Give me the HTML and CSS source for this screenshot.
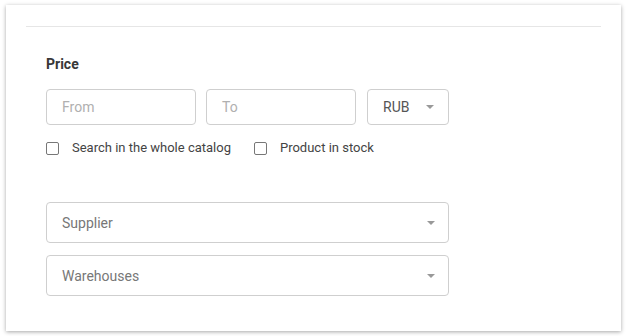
FILE: index.html
```html
<!DOCTYPE html>
<html lang="en">
<head>
  <meta charset="UTF-8" />
  <title>Filter</title>
  <link rel="stylesheet" href="styles.css">
</head>
<body>
  <div class="card">
    <div class="divider"></div>
    <div class="content">
      <div class="label">Price</div>
      <div class="price-row">
        <div class="field price">From</div>
        <div class="field price">To</div>
        <div class="field currency">
          <span class="value">RUB</span>
          <span class="caret"></span>
        </div>
      </div>
      <div class="checks">
        <label class="check"><span class="box"></span>Search in the whole catalog</label>
        <label class="check"><span class="box"></span>Product in stock</label>
      </div>
      <div class="selects">
        <div class="field select">
          <span class="value">Supplier</span>
          <span class="caret"></span>
        </div>
        <div class="field select">
          <span class="value">Warehouses</span>
          <span class="caret"></span>
        </div>
      </div>
    </div>
  </div>
</body>
</html>
```
FILE: styles.css
```css
body {
  margin: 0;
  padding: 5px 6px;
  background: #fff;
  font-family: Roboto, "Liberation Sans", sans-serif;
  color: #333;
}
.card {
  width: 615px;
  height: 326px;
  box-sizing: border-box;
  background: #fff;
  box-shadow: 0 1px 4px rgba(0, 0, 0, 0.35);
  padding: 21px 20px 0;
}
.divider {
  height: 1px;
  background: #e6e6e6;
}
.content {
  padding: 0 20px;
}
.label {
  margin-top: 29px;
  font-size: 14px;
  font-weight: bold;
  line-height: 16px;
  color: #383838;
}
.price-row {
  display: flex;
  gap: 10px;
  margin-top: 17px;
}
.field {
  display: flex;
  align-items: center;
  box-sizing: border-box;
  height: 36px;
  border: 1px solid #cfcfcf;
  border-radius: 4px;
  font-size: 14px;
}
.price {
  width: 150px;
  padding-left: 15px;
  color: #b0b0b0;
}
.currency {
  width: 82px;
  margin-left: 1px;
  padding: 0 14px 0 15px;
  justify-content: space-between;
  color: #555;
}
.caret {
  width: 0;
  height: 0;
  border-left: 4px solid transparent;
  border-right: 4px solid transparent;
  border-top: 4px solid #999;
}
.checks {
  display: flex;
  gap: 23px;
  margin-top: 15px;
}
.check {
  display: flex;
  align-items: center;
  gap: 13px;
  font-size: 13px;
  color: #444;
  line-height: 16px;
}
.box {
  width: 13px;
  height: 13px;
  box-sizing: border-box;
  border: 1px solid #777;
  border-radius: 2px;
}
.selects {
  display: flex;
  flex-direction: column;
  gap: 12px;
  margin-top: 46px;
  width: 403px;
}
.select {
  height: 41px;
  padding: 0 13px 0 15px;
  justify-content: space-between;
  color: #777;
}
```
